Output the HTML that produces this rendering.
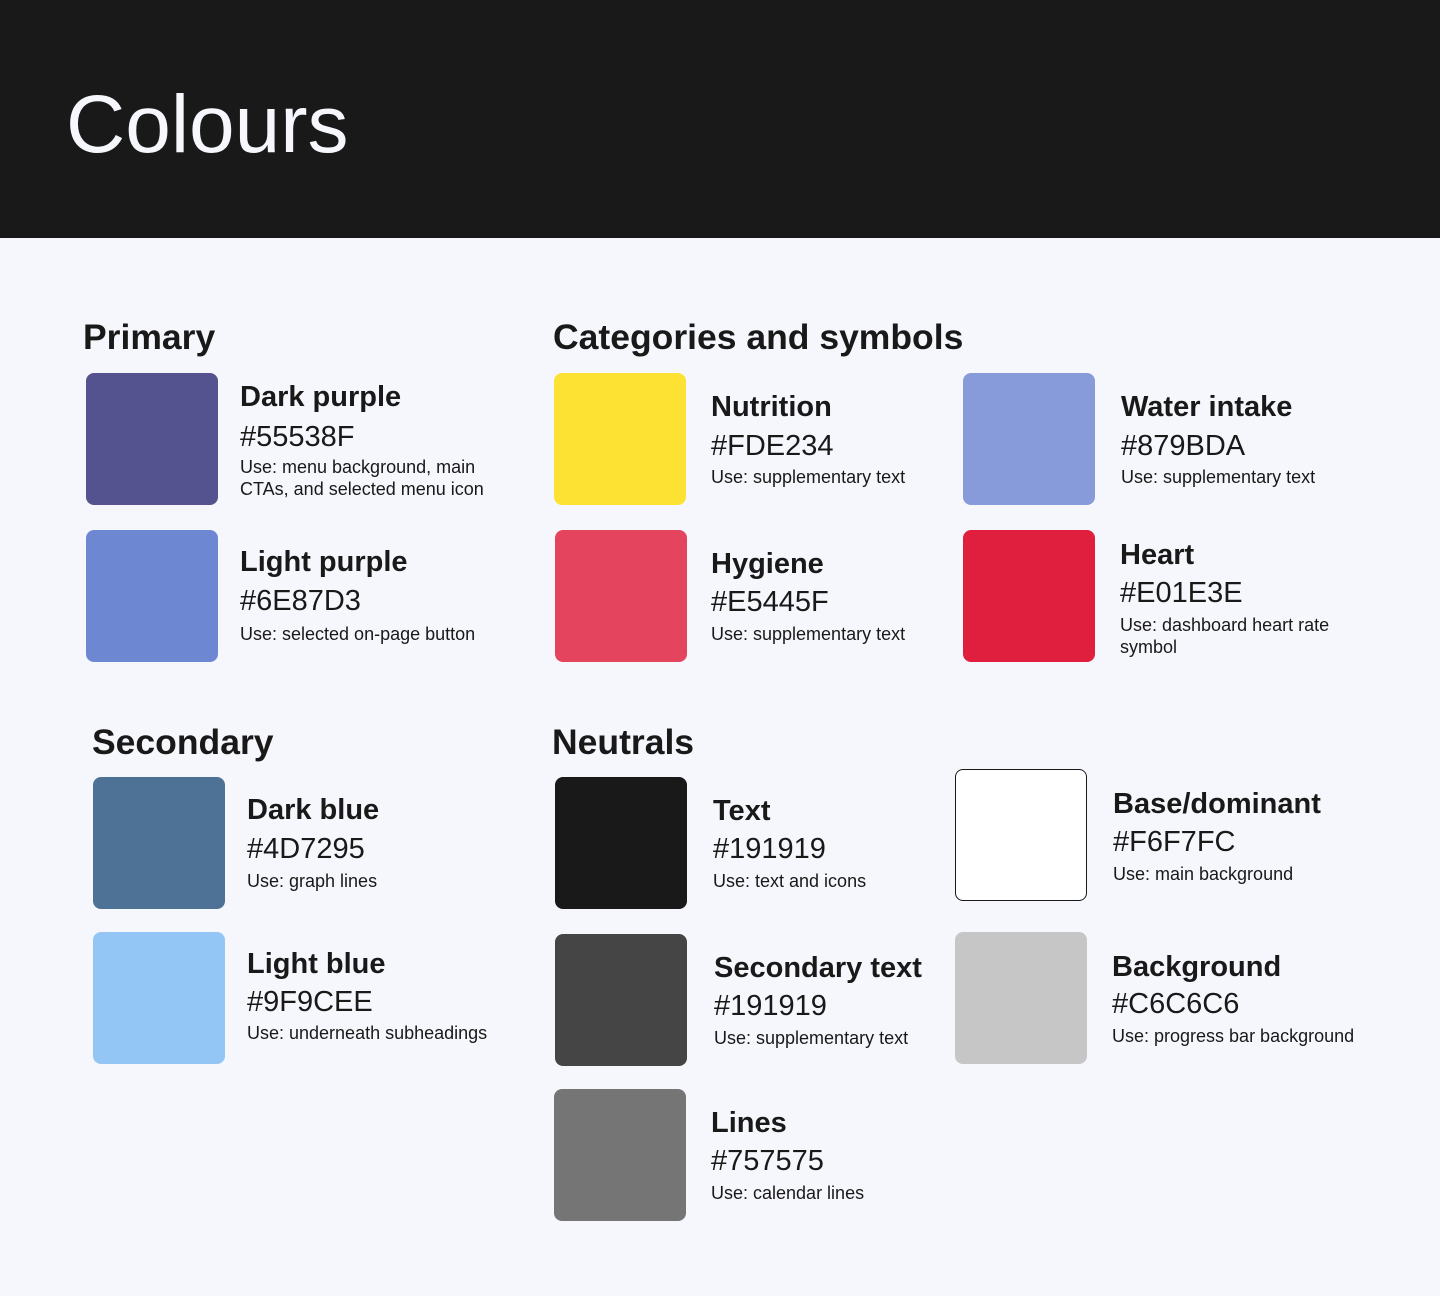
<!DOCTYPE html>
<html><head><meta charset="utf-8"><style>
*{margin:0;padding:0;box-sizing:border-box}
body{width:1440px;height:1296px;background:#F6F7FC;font-family:"Liberation Sans",sans-serif;color:#191919;position:relative;overflow:hidden}
.hdr{position:absolute;left:0;top:0;width:1440px;height:238px;background:#191919}
.hdr h1{position:absolute;left:66px;top:76px;font-size:82px;line-height:98px;font-weight:400;color:#F6F7FC}
.h2{position:absolute;font-size:35.5px;font-weight:700;line-height:40px;white-space:nowrap}
.sw{position:absolute;width:132px;height:132px;border-radius:8px}
.t{position:absolute;font-size:29px;font-weight:700;line-height:34px;white-space:nowrap}
.x{position:absolute;font-size:29px;font-weight:400;line-height:34px;white-space:nowrap}
.u{position:absolute;font-size:18px;line-height:22px;white-space:nowrap}
</style></head><body>
<div class="hdr"><h1>Colours</h1></div>

<div class="h2" style="left:83px;top:317px">Primary</div>
<div class="h2" style="left:553px;top:317px">Categories and symbols</div>
<div class="h2" style="left:92px;top:722px">Secondary</div>
<div class="h2" style="left:552px;top:722px">Neutrals</div>

<div class="sw" style="left:86px;top:373px;background:#55538F"></div>
<div class="t" style="left:240px;top:380px">Dark purple</div>
<div class="x" style="left:240px;top:420px">#55538F</div>
<div class="u" style="left:240px;top:456px">Use: menu background, main</div>
<div class="u" style="left:240px;top:478px">CTAs, and selected menu icon</div>

<div class="sw" style="left:86px;top:530px;background:#6E87D3"></div>
<div class="t" style="left:240px;top:545px">Light purple</div>
<div class="x" style="left:240px;top:584px">#6E87D3</div>
<div class="u" style="left:240px;top:623px">Use: selected on-page button</div>

<div class="sw" style="left:554px;top:373px;background:#FDE234"></div>
<div class="t" style="left:711px;top:390px">Nutrition</div>
<div class="x" style="left:711px;top:429px">#FDE234</div>
<div class="u" style="left:711px;top:466px">Use: supplementary text</div>

<div class="sw" style="left:963px;top:373px;background:#879BDA"></div>
<div class="t" style="left:1121px;top:390px">Water intake</div>
<div class="x" style="left:1121px;top:429px">#879BDA</div>
<div class="u" style="left:1121px;top:466px">Use: supplementary text</div>

<div class="sw" style="left:555px;top:530px;background:#E5445F"></div>
<div class="t" style="left:711px;top:547px">Hygiene</div>
<div class="x" style="left:711px;top:585px">#E5445F</div>
<div class="u" style="left:711px;top:623px">Use: supplementary text</div>

<div class="sw" style="left:963px;top:530px;background:#E01E3E"></div>
<div class="t" style="left:1120px;top:538px">Heart</div>
<div class="x" style="left:1120px;top:576px">#E01E3E</div>
<div class="u" style="left:1120px;top:614px">Use: dashboard heart rate</div>
<div class="u" style="left:1120px;top:636px">symbol</div>

<div class="sw" style="left:93px;top:777px;background:#4D7295"></div>
<div class="t" style="left:247px;top:793px">Dark blue</div>
<div class="x" style="left:247px;top:832px">#4D7295</div>
<div class="u" style="left:247px;top:870px">Use: graph lines</div>

<div class="sw" style="left:93px;top:932px;background:#94C6F5"></div>
<div class="t" style="left:247px;top:947px">Light blue</div>
<div class="x" style="left:247px;top:985px">#9F9CEE</div>
<div class="u" style="left:247px;top:1022px">Use: underneath subheadings</div>

<div class="sw" style="left:555px;top:777px;background:#191919"></div>
<div class="t" style="left:713px;top:794px">Text</div>
<div class="x" style="left:713px;top:832px">#191919</div>
<div class="u" style="left:713px;top:870px">Use: text and icons</div>

<div class="sw" style="left:955px;top:769px;background:#fff;border:1px solid #191919"></div>
<div class="t" style="left:1113px;top:787px">Base/dominant</div>
<div class="x" style="left:1113px;top:825px">#F6F7FC</div>
<div class="u" style="left:1113px;top:863px">Use: main background</div>

<div class="sw" style="left:555px;top:934px;background:#454545"></div>
<div class="t" style="left:714px;top:951px">Secondary text</div>
<div class="x" style="left:714px;top:989px">#191919</div>
<div class="u" style="left:714px;top:1027px">Use: supplementary text</div>

<div class="sw" style="left:955px;top:932px;background:#C6C6C6"></div>
<div class="t" style="left:1112px;top:950px">Background</div>
<div class="x" style="left:1112px;top:987px">#C6C6C6</div>
<div class="u" style="left:1112px;top:1025px">Use: progress bar background</div>

<div class="sw" style="left:554px;top:1089px;background:#757575"></div>
<div class="t" style="left:711px;top:1106px">Lines</div>
<div class="x" style="left:711px;top:1144px">#757575</div>
<div class="u" style="left:711px;top:1182px">Use: calendar lines</div>
</body></html>
